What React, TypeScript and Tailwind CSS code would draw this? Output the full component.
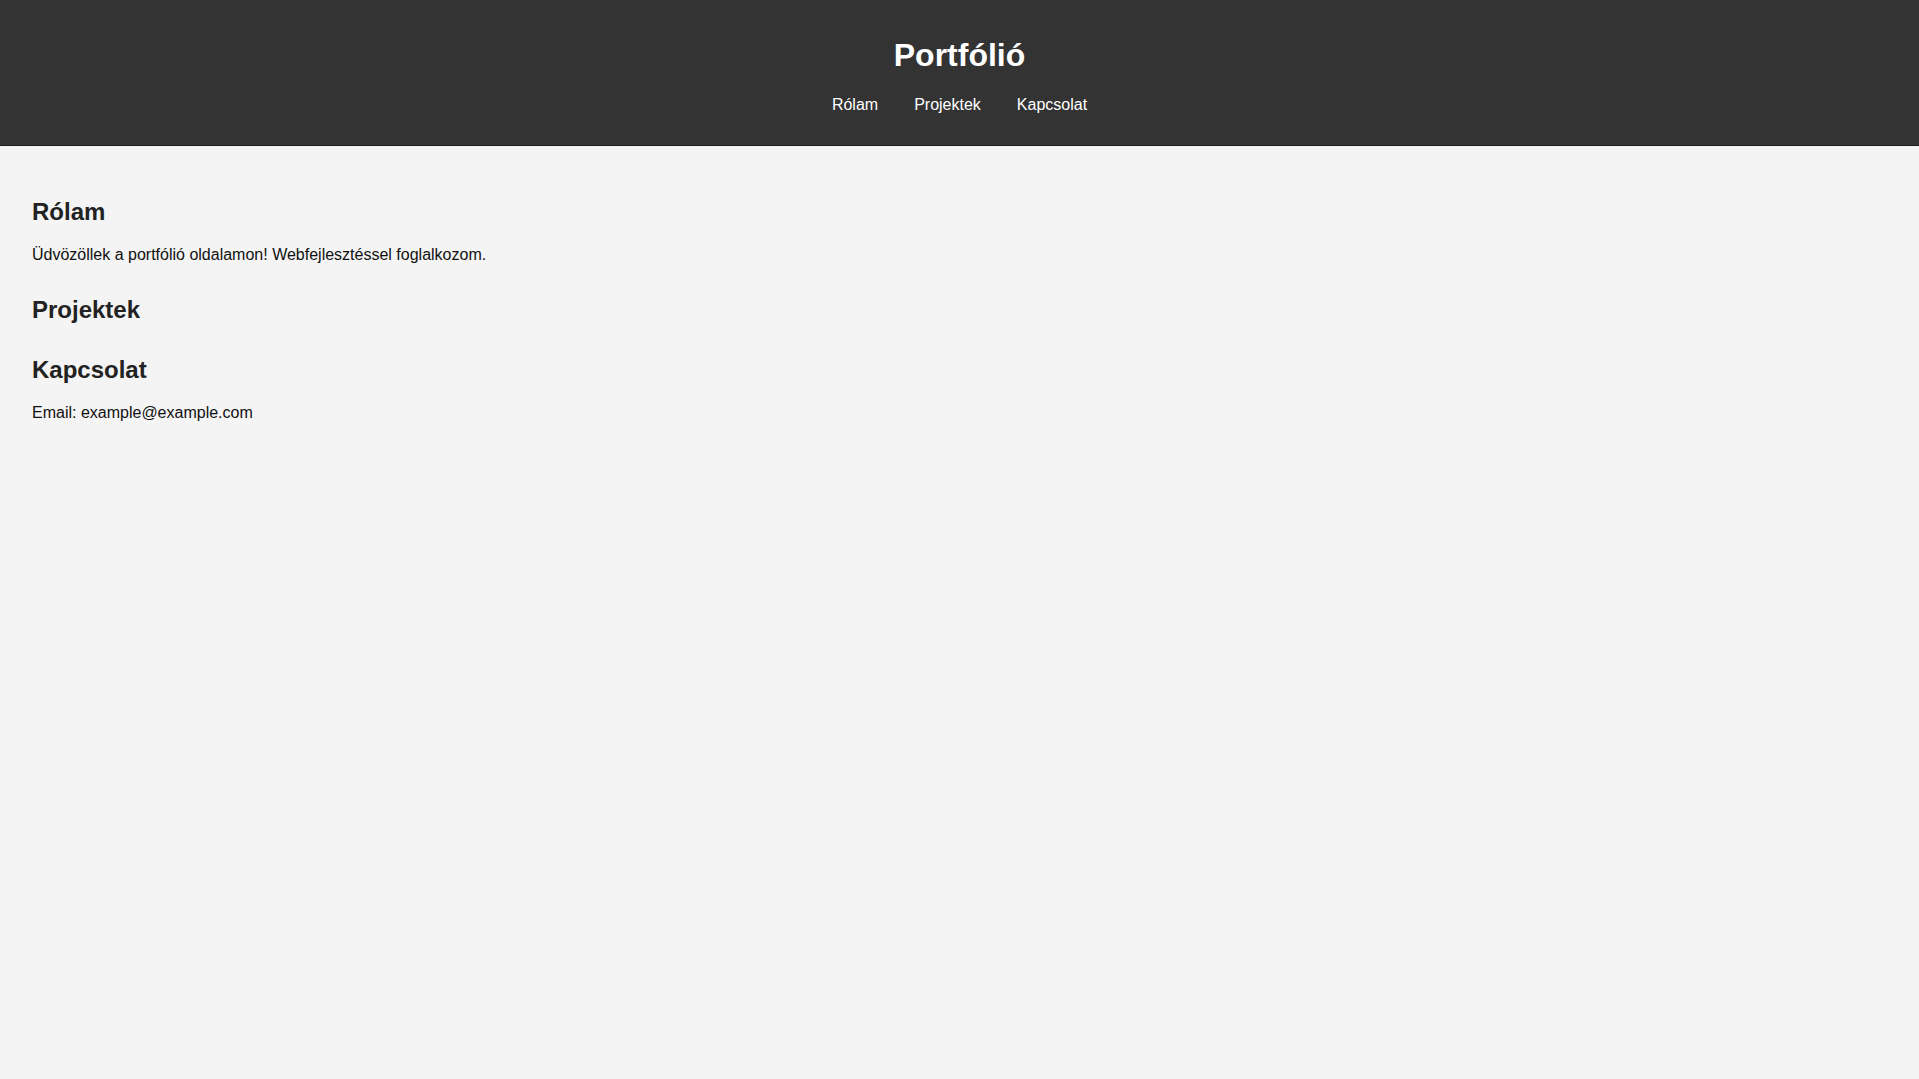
export default function App() {
  const links = ["Rólam", "Projektek", "Kapcsolat"];

  return (
    <div className="min-h-screen bg-[#f4f4f4] text-[#222] font-['Liberation_Sans',Arial,sans-serif] leading-[normal]">
      {/* ---------- HEADER ---------- */}
      <header className="bg-[#333] text-white text-center pt-4 pb-[15px] border-b border-[#1e1e1e]">
        <h1 className="text-[32px] font-bold mt-[21.44px] mb-[21.44px]">Portfólió</h1>
        <nav>
          <ul className="flex justify-center gap-[36px] mb-4 text-[16px]">
            {links.map((link) => (
              <li key={link}>
                <a href={"#" + link} className="text-white">
                  {link}
                </a>
              </li>
            ))}
          </ul>
        </nav>
      </header>

      {/* ---------- CONTENT ---------- */}
      <main className="px-8 pt-8">
        <section id="Rólam" className="mb-8">
          <h2 className="text-[24px] font-bold mt-[19.92px] mb-[19.92px]">Rólam</h2>
          <p className="text-[16px] text-[#111]">
            Üdvözöllek a portfólió oldalamon! Webfejlesztéssel foglalkozom.
          </p>
        </section>

        <section id="Projektek" className="mb-8">
          <h2 className="text-[24px] font-bold mt-[19.92px] mb-[19.92px]">Projektek</h2>
        </section>

        <section id="Kapcsolat" className="mb-8">
          <h2 className="text-[24px] font-bold mt-[19.92px] mb-[19.92px]">Kapcsolat</h2>
          <p className="text-[16px] text-[#111]">Email: example@example.com</p>
        </section>
      </main>
    </div>
  );
}
